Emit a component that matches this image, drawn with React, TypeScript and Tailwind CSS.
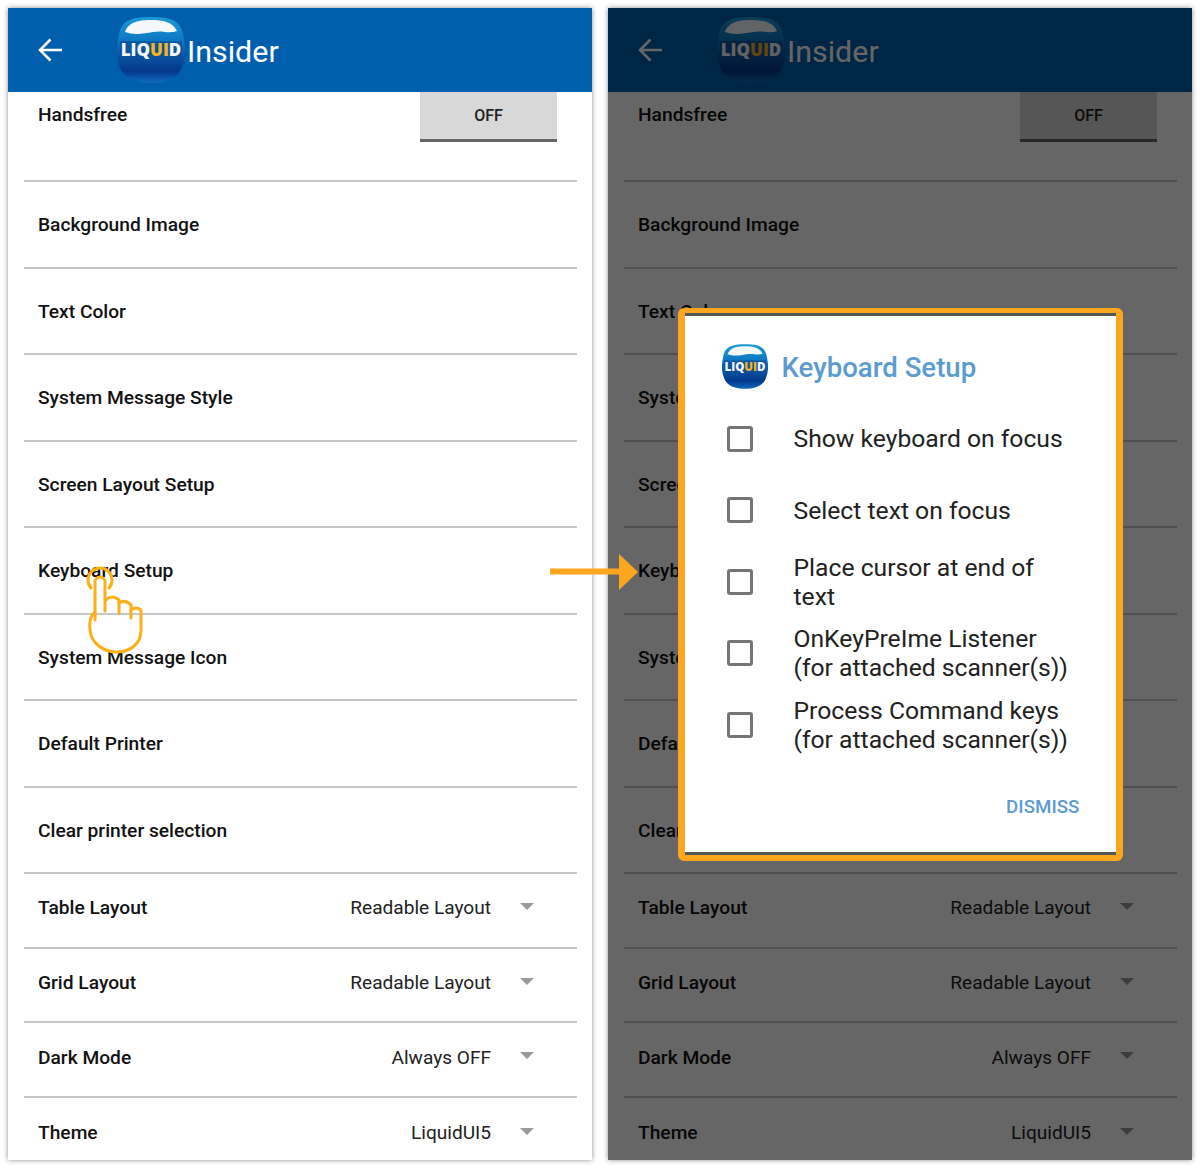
import { useId } from "react";

const simpleRows = [
  "Background Image",
  "Text Color",
  "System Message Style",
  "Screen Layout Setup",
  "Keyboard Setup",
  "System Message Icon",
  "Default Printer",
  "Clear printer selection",
];

const selectRows = [
  { label: "Table Layout", value: "Readable Layout" },
  { label: "Grid Layout", value: "Readable Layout" },
  { label: "Dark Mode", value: "Always OFF" },
  { label: "Theme", value: "LiquidUI5" },
];

const options = [
  ["Show keyboard on focus"],
  ["Select text on focus"],
  ["Place cursor at end of", "text"],
  ["OnKeyPreIme Listener", "(for attached scanner(s))"],
  ["Process Command keys", "(for attached scanner(s))"],
];

const Logo = ({ className }: { className: string }) => {
  const id = useId();
  return (
    <svg viewBox="0 0 68 66" className={className}>
      <defs>
        <linearGradient id={id} x1="0" y1="0" x2="0" y2="1">
          <stop offset="0" stopColor="#1c9ad8" />
          <stop offset="0.35" stopColor="#0d78c4" />
          <stop offset="0.62" stopColor="#0a4f9f" />
          <stop offset="0.82" stopColor="#03378c" />
          <stop offset="1" stopColor="#0f6cc0" />
        </linearGradient>
      </defs>
      <path
        d="M34 0C53 0 63 3 66 17C69 30 69 40 65 50C61 62 48 66 34 66C20 66 7 62 3 50C-1 40 -1 30 2 17C5 3 15 0 34 0Z"
        fill={`url(#${id})`}
      />
      <path
        d="M8 15C12 4 24 3 34 3C46 3 56 5 60 14C52 17 46 13 36 15C26 17 16 18 8 15Z"
        fill="#f4f8fb"
      />
      <rect x="3" y="24" width="62" height="18" fill="#0b4f98" opacity="0.75" />
      <text
        x="34"
        y="39"
        textAnchor="middle"
        fontFamily="'Open Sans', sans-serif"
        fontWeight="800"
        fontSize="17"
        fill="#f2f4f6"
      >
        LIQ<tspan fill="#f6b221">UI</tspan>D
      </text>
    </svg>
  );
};

const Screen = ({ dimmed }: { dimmed?: boolean }) => (
  <div className="relative h-[1152px] w-[584px] overflow-hidden bg-white shadow-[0_0_5px_rgba(0,0,0,0.45)]">
    <header className="flex h-[84px] items-center bg-[#005fad] pl-[30px]">
      <svg viewBox="0 0 24 24" className="h-6 w-6 shrink-0" fill="none" stroke="#fff" strokeWidth="2.6">
        <path d="M24 12H2.500M12.500 1.500 2 12l10.500 10.500" />
      </svg>
      <Logo className="ml-[55px] h-[66px] w-[68px] shrink-0" />
      <span className="ml-0.5 mt-1 text-[30.400px] leading-none text-white">Insider</span>
    </header>

    <div className="pl-4 pr-[15px]">
      <div className="flex h-[90px] items-start justify-between border-b-2 border-[#c6c6c6] pl-3.5 pr-5">
        <span className="mt-[11px] text-[19.200px] font-medium leading-6 text-[#111]">Handsfree</span>
        <button className="h-[50px] w-[137px] border-b-[3px] border-[#666] bg-[#d7d8d7] text-[16px] font-medium text-[#222]">
          OFF
        </button>
      </div>
      {simpleRows.map((label) => (
        <div
          key={label}
          className="flex h-[86.500px] items-center border-b-2 border-[#c6c6c6] pl-3.5 pt-[3px] text-[19.200px] font-medium text-[#111]"
        >
          {label}
        </div>
      ))}
      {selectRows.map(({ label, value }) => (
        <div
          key={label}
          className="flex h-[74.600px] items-center justify-between border-b-2 border-[#c6c6c6] pb-[3px] pl-3.5 last:border-b-0"
        >
          <span className="text-[19.200px] font-medium text-[#111]">{label}</span>
          <span className="flex items-center text-[19.100px] text-[#222]">
            {value}
            <span className="ml-[29px] mr-[43px] h-0 w-0 -translate-y-[2px] border-x-[7px] border-t-[7px] border-x-transparent border-t-[#9a9a9a]" />
          </span>
        </div>
      ))}
    </div>

    {dimmed && (
      <div className="absolute inset-0 flex items-center justify-center bg-black/60">
        <div className="h-[553px] w-[445px] rounded-md border-x-[7.500px] border-b-[6px] border-t-[5px] border-[#fca61f]">
          <div className="h-full rounded-[2px] border-y-[3px] border-[#555] bg-white">
            <div className="ml-[37px] mt-[27px] flex h-[47px] items-center">
              <Logo className="h-[47px] w-[46px] shrink-0" />
              <span className="ml-[14px] mt-[4px] text-[27.600px] font-medium leading-none text-[#5b9bd0]">
                Keyboard Setup
              </span>
            </div>
            <div className="mt-[13.500px]">
              {options.map((lines) => (
                <div key={lines[0]} className="flex h-[71.500px] items-center pl-[42px]">
                  <span className="h-[26px] w-[26px] shrink-0 rounded-[3px] border-[3px] border-[#757575]" />
                  <span className="ml-[41px] text-[24.700px] leading-[29px] text-[#212121]">
                    {lines.map((line) => (
                      <span key={line} className="block">
                        {line}
                      </span>
                    ))}
                  </span>
                </div>
              ))}
            </div>
            <div className="mt-[35px] flex justify-end pr-9 text-[18.800px] font-medium leading-[22px] text-[#5b9bd0]">
              DISMISS
            </div>
          </div>
        </div>
      </div>
    )}
  </div>
);

const App = () => (
  <div
    className="relative flex h-[1168px] w-[1200px] gap-4 overflow-hidden bg-white p-2"
    style={{ fontFamily: "Roboto, sans-serif" }}
  >
    <Screen />
    <Screen dimmed />

    {/* tap hand */}
    <svg
      viewBox="0 0 120 120"
      className="absolute left-[60px] top-[550px] h-[120px] w-[120px]"
      fill="none"
      stroke="#fcb017"
      strokeWidth="3"
      strokeLinecap="round"
      strokeLinejoin="round"
    >
      <path d="M31 38A12 12 0 1 1 49 38" />
      <path d="M35 70V32a5 5 0 0 1 10 0V61" />
      <path d="M46 50q6-6 13 0V63" />
      <path d="M59 53q6-4 12 2V68" />
      <path d="M71 60q5-4 10 0V80C81 94 70 102 57 102C42 102 31 92 30 80C29 72 30 66 35 62" />
    </svg>

    {/* callout arrow */}
    <svg viewBox="0 0 88 36" className="absolute left-[550px] top-[554px] h-9 w-[88px]" fill="#fca61f">
      <path d="M0 14.500H69V0L88 18 69 36V20.500H0Z" />
    </svg>
  </div>
);

export default App;
